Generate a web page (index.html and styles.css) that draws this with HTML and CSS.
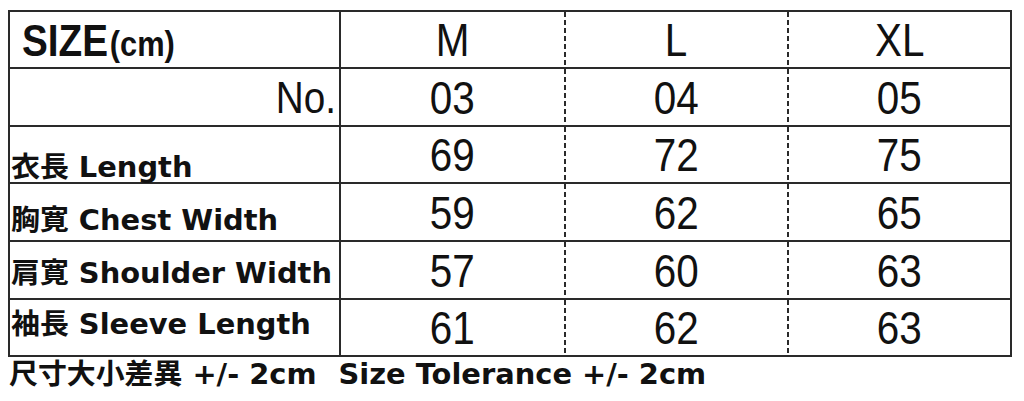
FILE: index.html
```html
<!DOCTYPE html>
<html lang="ja">
<head>
<meta charset="utf-8">
<title>Size chart</title>
<link rel="stylesheet" href="styles.css">
</head>
<body>
<div class="sheet">
  <div class="chart">
    <div class="row">
      <div class="cell cell-key"><span class="title"><span class="title-main">SIZE</span><span class="title-unit">(cm)</span></span></div>
      <div class="cell cell-val"><span class="num">M</span></div>
      <div class="cell cell-val cell-dash"><span class="num">L</span></div>
      <div class="cell cell-val cell-dash"><span class="num">XL</span></div>
    </div>
    <div class="row">
      <div class="cell cell-key cell-no"><span class="num num-right">No.</span></div>
      <div class="cell cell-val"><span class="num">03</span></div>
      <div class="cell cell-val cell-dash"><span class="num">04</span></div>
      <div class="cell cell-val cell-dash"><span class="num">05</span></div>
    </div>
    <div class="row">
      <div class="cell cell-key label lbl-a">衣長 Length</div>
      <div class="cell cell-val"><span class="num">69</span></div>
      <div class="cell cell-val cell-dash"><span class="num">72</span></div>
      <div class="cell cell-val cell-dash"><span class="num">75</span></div>
    </div>
    <div class="row">
      <div class="cell cell-key label lbl-b">胸寛 Chest Width</div>
      <div class="cell cell-val"><span class="num">59</span></div>
      <div class="cell cell-val cell-dash"><span class="num">62</span></div>
      <div class="cell cell-val cell-dash"><span class="num">65</span></div>
    </div>
    <div class="row">
      <div class="cell cell-key label lbl-c">肩寛 Shoulder Width</div>
      <div class="cell cell-val"><span class="num">57</span></div>
      <div class="cell cell-val cell-dash"><span class="num">60</span></div>
      <div class="cell cell-val cell-dash"><span class="num">63</span></div>
    </div>
    <div class="row">
      <div class="cell cell-key label lbl-d">袖長 Sleeve Length</div>
      <div class="cell cell-val"><span class="num">61</span></div>
      <div class="cell cell-val cell-dash"><span class="num">62</span></div>
      <div class="cell cell-val cell-dash"><span class="num">63</span></div>
    </div>
  </div>
  <p class="note"><span>尺寸大小差異 +/- 2cm</span><span>Size Tolerance +/- 2cm</span></p>
</div>
</body>
</html>
```

FILE: styles.css
```css
* { box-sizing: border-box; }
html, body { margin: 0; padding: 0; background: #fff; }
body { color: #111; }

.sheet {
  width: 1024px;
  height: 401px;
  overflow: hidden;
  padding: 10px 0 0 8px;
}

.chart {
  width: 1004px;
  border: 2px solid #2a2a2a;
  background: #fff;
}

.row {
  display: grid;
  grid-template-columns: 331px 223px 223px 223px;
  height: 57px;
  border-bottom: 2px solid #2a2a2a;
}
.row:nth-child(2),
.row:nth-child(4),
.row:nth-child(5) { height: 58px; }
.row:last-child { height: 55px; border-bottom: 0; }

.cell { min-width: 0; }

.cell-key {
  border-right: 2px solid #2a2a2a;
  display: flex;
  align-items: center;
  padding-left: 12px;
}

.cell-no {
  justify-content: flex-end;
  padding-right: 3px;
}

.cell-val {
  display: flex;
  align-items: center;
  justify-content: center;
}

.cell-dash {
  background: repeating-linear-gradient(to bottom, #2a2a2a 0 5px, transparent 5px 8px) left top / 2px 100% no-repeat;
  padding-left: 2px;
}

.num {
  display: inline-block;
  font-family: "Liberation Sans", Arial, sans-serif;
  font-size: 47px;
  line-height: 1;
  transform: scaleX(0.86);
  color: #111;
}
.num-right { transform-origin: right center; font-size: 45px; }

.title {
  display: inline-block;
  font-family: "Liberation Sans", Arial, sans-serif;
  font-weight: 700;
  line-height: 1;
  transform: scaleX(0.88);
  transform-origin: left center;
  white-space: nowrap;
  padding-top: 3px;
}
.title-main { font-size: 44px; }
.title-unit { font-size: 35px; margin-left: 2px; }

.label {
  font-family: "DejaVu Sans", "Noto Sans CJK JP", sans-serif;
  font-weight: 700;
  font-size: 28.9px;
  line-height: 28px;
  align-items: flex-start;
  padding-left: 1px;
  white-space: nowrap;
  color: #111;
}
.lbl-a { padding-top: 26px; }
.lbl-b { padding-top: 22px; }
.lbl-c { padding-top: 17px; }
.lbl-d { padding-top: 10px; }

.note {
  margin: 3px 0 0 1px;
  display: flex;
  gap: 22px;
  font-family: "DejaVu Sans", "Noto Sans CJK JP", sans-serif;
  font-weight: 700;
  font-size: 28.9px;
  line-height: 28px;
  white-space: nowrap;
  color: #111;
}
```
